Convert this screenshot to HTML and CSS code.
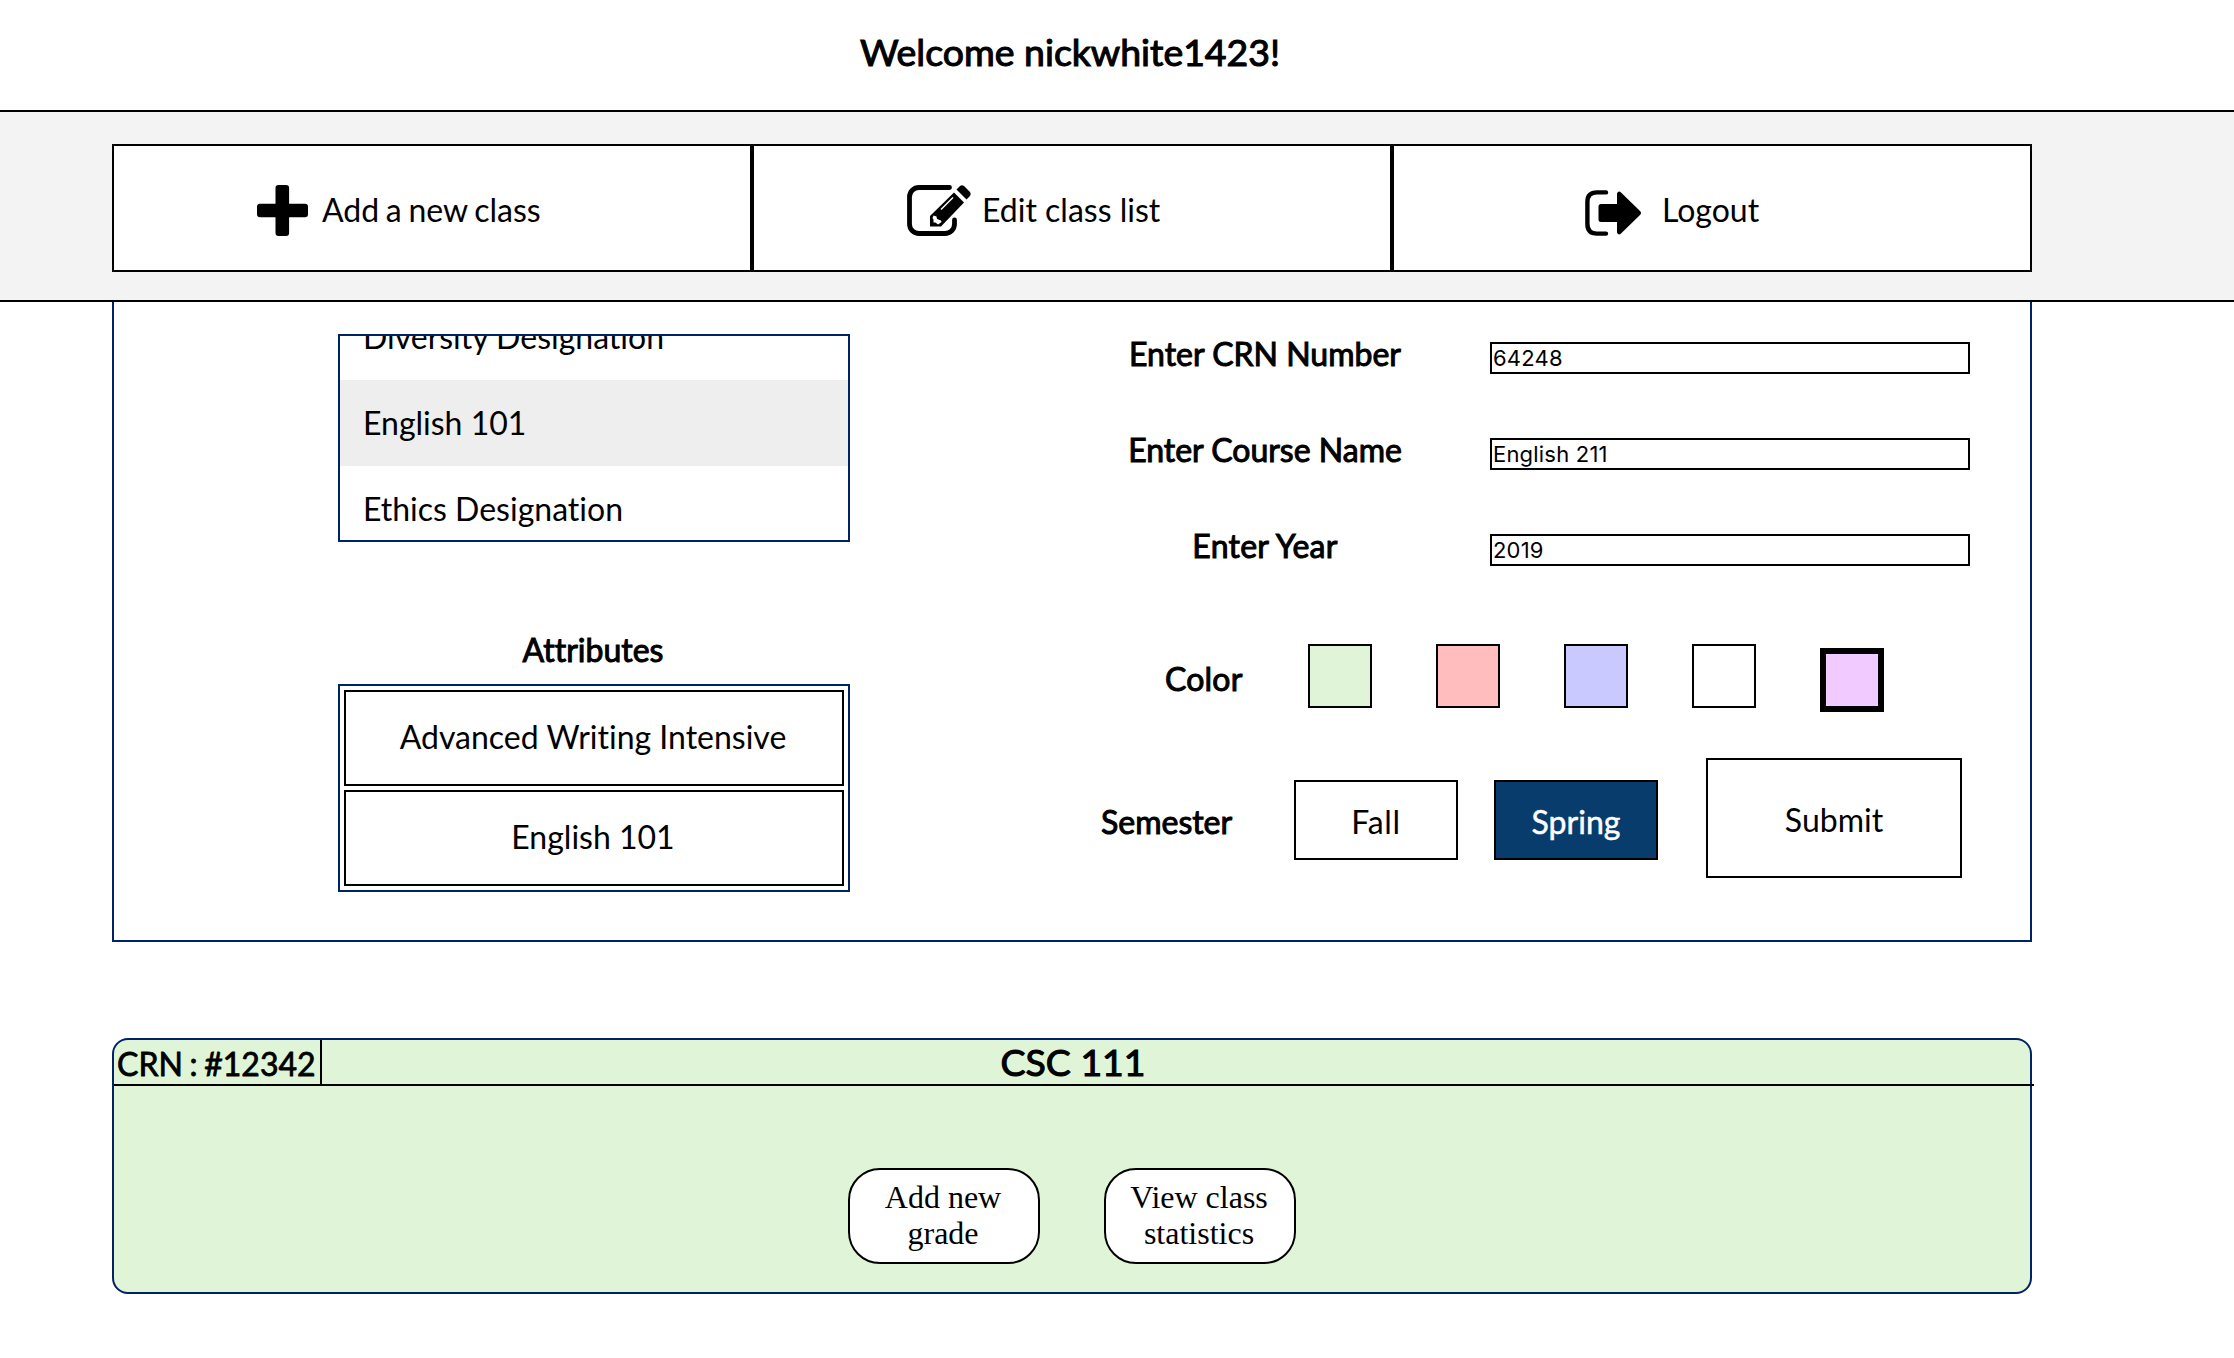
FILE: index.html
```html
<!DOCTYPE html>
<html lang="en">
<head>
<meta charset="utf-8">
<title>Classes</title>
<link rel="stylesheet" href="styles.css">
</head>
<body>
<header class="welcome"><h3 class="welcome-title">Welcome nickwhite1423!</h3></header>
<nav class="nav">
  <a class="nav-item add">
    <svg class="icon-plus" width="51" height="51" viewBox="0 0 51 51"><rect x="18.5" y="0" width="13.6" height="51" rx="3"/><rect x="0" y="18.7" width="51" height="13.6" rx="3"/></svg>
    <span>Add a new class</span>
  </a>
  <a class="nav-item edit">
    <svg class="icon-edit" width="64" height="51" viewBox="0 0 64 51">
      <path d="M42.500 2.500H12a9.500 9.500 0 0 0-9.500 9.500V39a9.500 9.500 0 0 0 9.500 9.500H38a9.500 9.500 0 0 0 9.500-9.500V35" fill="none" stroke="#000" stroke-width="4.800" stroke-linecap="round"/>
      <path d="M47 7.500L57 17.500L34 41.500H23V31Z"/>
      <path d="M49.500 4.500L53 1Q55 -.5 57 1L63 7Q64.500 9 63 11L59.500 14.500Z"/>
      <path d="M34 24.500L46 12.500" fill="none" stroke="#fff" stroke-width="1.500"/>
      <path d="M26.500 30.500L29.500 31.500L30 34L34 35.500L34.500 37L31 39.500L28.500 37.500H26.500V34.500L25.500 33Z" fill="#fff"/>
    </svg>
    <span>Edit class list</span>
  </a>
  <a class="nav-item logout">
    <svg class="icon-logout" width="56" height="46" viewBox="0 0 56 46">
      <path d="M21 2.400H12Q2.400 2.400 2.400 12V34Q2.400 43.600 12 43.600H21" fill="none" stroke="#000" stroke-width="4.400" stroke-linecap="round"/>
      <path d="M16 14H32V3.500Q33.500 0 36 2.500L55 21Q57 23 55 25L36 43.500Q33.500 46 32 42.500V32H16Q13.500 32 13.500 29.500V16.500Q13.500 14 16 14Z"/>
    </svg>
    <span>Logout</span>
  </a>
</nav>
<main class="content">
  <form class="panel">
    <section class="left">
      <div class="options">
        <div class="option">Diversity Designation</div>
        <div class="option selected">English 101</div>
        <div class="option">Ethics Designation</div>
      </div>
      <h4 class="attr-title">Attributes</h4>
      <div class="attributes">
        <div class="attribute">Advanced Writing Intensive</div>
        <div class="attribute">English 101</div>
      </div>
    </section>
    <section class="right">
      <div class="field"><label>Enter CRN Number</label><div class="input">64248</div></div>
      <div class="field"><label>Enter Course Name</label><div class="input">English 211</div></div>
      <div class="field"><label class="year">Enter Year</label><div class="input">2019</div></div>
      <div class="colors">
        <span class="color-label">Color</span>
        <i class="swatch green"></i><i class="swatch red"></i><i class="swatch blue"></i><i class="swatch white"></i><i class="swatch purple chosen"></i>
      </div>
      <div class="semester">
        <span class="semester-label">Semester</span>
        <div class="choice fall">Fall</div>
        <div class="choice active">Spring</div>
        <div class="submit">Submit</div>
      </div>
    </section>
  </form>
  <article class="card">
    <div class="card-head">
      <div class="crn">CRN : #12342</div>
      <h3 class="card-title">CSC 111</h3>
    </div>
    <div class="actions">
      <div class="action">Add new<br>grade</div>
      <div class="action">View class<br>statistics</div>
    </div>
  </article>
</main>
</body>
</html>
```
FILE: styles.css
```css
* { box-sizing: border-box; }
body { margin: 0; background: #fff; color: #000; font: 32px/38px Lato, sans-serif; font-variant-ligatures: none; height: 1358px; overflow: hidden; white-space: nowrap; }
h3, h4 { margin: 0; font-weight: 400; }
svg { display: block; flex: none; overflow: visible; }
.welcome { height: 110px; padding-top: 29px; }
.welcome-title { width: 1916px; margin-left: 112px; text-align: center; font-size: 37.44px; line-height: 45px; -webkit-text-stroke: 1.1px #000; }
.nav { height: 192px; padding: 32px 202px 28px 112px; border: solid #000; border-width: 2px 0; background: #f3f3f3; display: flex; }
.nav-item { width: 640px; height: 128px; border: 2px solid #000; background: #fff; display: flex; align-items: flex-start; }
.nav-item span { margin-top: 45px; }
.add { padding-left: 143px; word-spacing: -1.5px; }
.icon-plus { margin-top: 39px; margin-right: 14px; }
.edit { padding-left: 153px; }
.icon-edit { margin-top: 39px; margin-right: 11px; }
.logout { padding-left: 191px; }
.icon-logout { margin-top: 44px; margin-right: 21px; }
.content { width: 1920px; margin-left: 112px; }
.panel { height: 640px; border: 2px solid #002366; border-top: 0; display: flex; }
.left { width: 960px; padding: 32px 0 0 224px; }
.options { width: 512px; height: 208px; border: 2px solid #002366; overflow: hidden; display: flex; flex-direction: column; }
.option { height: 86px; flex: none; padding: 24px 23px; }
.option:first-child { margin-top: -42px; }
.selected { background: #eee; }
.attr-title { width: 510px; height: 142px; padding-top: 89px; text-align: center; font-size: 32px; -webkit-text-stroke: 1px #000; }
.attributes { width: 512px; height: 208px; border: 2px solid #002366; padding: 4px; display: flex; flex-direction: column; gap: 4px; }
.attribute { height: 96px; border: 2px solid #000; text-align: center; padding: 26px 2px 0 0; }
.right { width: 956px; padding-top: 33px; }
.field { height: 96px; display: flex; }
.field label { width: 382px; text-align: center; -webkit-text-stroke: 1px #000; }
.field .year { letter-spacing: .25px; }
.input { width: 480px; height: 32px; margin: 7px 0 0 34px; border: 2px solid #000; padding-left: 1px; font: 22px/28px Inter, sans-serif; letter-spacing: .2px; }
.colors { display: flex; height: 135px; padding: 19px 0 0 91px; }
.color-label { width: 143px; margin-top: 18px; -webkit-text-stroke: 1px #000; letter-spacing: .2px; }
.swatch { width: 64px; height: 64px; border: 2px solid #000; margin: 2px 64px 0 0; flex: none; }
.green { background: #e0f5d7; }
.red { background: #ffbdbd; }
.blue { background: #c9c9ff; }
.white { background: #fff; }
.purple { background: #f1cbff; }
.chosen { border-width: 6px; margin-top: 6px; }
.semester { display: flex; align-items: center; height: 120px; padding-left: 27px; }
.semester-label { width: 193px; margin-top: 8px; -webkit-text-stroke: 1px #000; }
.choice { width: 164px; height: 80px; margin: 4px 36px 0 0; border: 2px solid #000; text-align: center; padding-top: 21px; }
.fall { letter-spacing: .7px; }
.active { background: #073c6d; color: #fff; margin-right: 48px; -webkit-text-stroke: .5px #fff; }
.submit { width: 256px; height: 120px; border: 2px solid #000; text-align: center; padding-top: 41px; }
.card { width: 1920px; height: 256px; margin-top: 96px; border: 2px solid #002366; border-radius: 16px; background: #e0f5d7; }
.card-head { width: 1920px; height: 46px; border-bottom: 2px solid #000; display: flex; }
.crn { width: 208px; border-right: 2px solid #000; padding: 5px 0 0 3px; word-spacing: -1.5px; -webkit-text-stroke: .8px #000; }
.card-title { flex: 1; padding-right: 210px; text-align: center; font-size: 37.44px; line-height: 43px; -webkit-text-stroke: 1.1px #000; }
.actions { display: flex; justify-content: center; gap: 64px; margin-top: 82px; }
.action { width: 192px; height: 96px; border: 2px solid #000; border-radius: 32px; background: #fff; font: 32px/36px "Liberation Serif", serif; text-align: center; padding: 9px 2px 0 0; }
```
